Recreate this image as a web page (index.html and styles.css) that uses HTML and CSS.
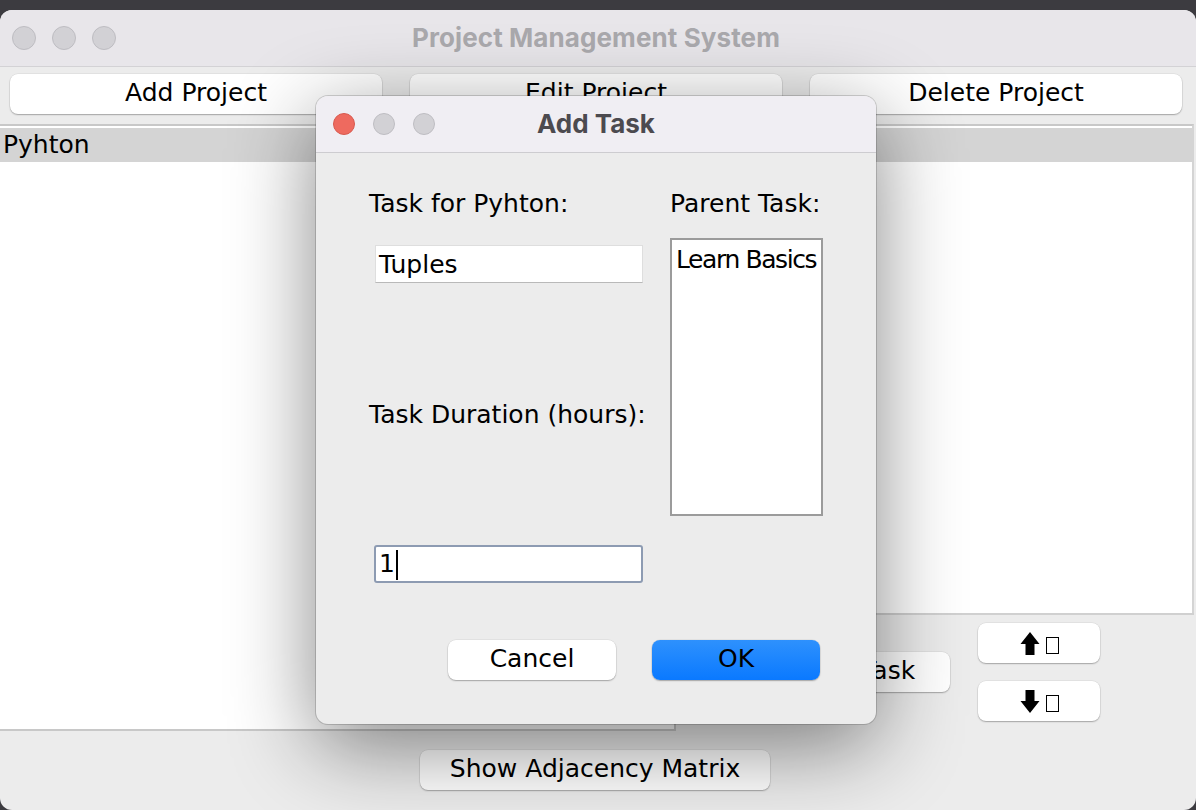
FILE: index.html
```html
<!DOCTYPE html>
<html>
<head>
<meta charset="utf-8">
<title>Project Management System</title>
<link rel="stylesheet" href="styles.css">
</head>
<body>
<div class="window">
  <div class="titlebar">
    <div class="lights">
      <span class="light"></span><span class="light"></span><span class="light"></span>
    </div>
    <div class="title">Project Management System</div>
    <div></div>
  </div>
  <div class="toolbar">
    <button class="btn wide">Add Project</button>
    <button class="btn wide">Edit Project</button>
    <button class="btn wide">Delete Project</button>
  </div>
  <div class="main">
    <div class="projects">
      <div class="row selected">Pyhton</div>
    </div>
    <div class="tasks"></div>
    <div class="side">
      <button class="btn task-btn">Add Task</button>
      <div class="arrows">
        <button class="btn arrow-btn">
          <svg class="arrow" width="20" height="23" viewBox="0 0 20 23"><polygon points="10,0 19.5,12 14.5,12 14.5,23 5.5,23 5.5,12 0.5,12" fill="#000"/></svg><span class="tofu"></span>
        </button>
        <button class="btn arrow-btn">
          <svg class="arrow" width="20" height="23" viewBox="0 0 20 23"><polygon points="10,23 19.5,11 14.5,11 14.5,0 5.5,0 5.5,11 0.5,11" fill="#000"/></svg><span class="tofu"></span>
        </button>
      </div>
    </div>
  </div>
  <div class="bottom">
    <button class="btn matrix">Show Adjacency Matrix</button>
  </div>
</div>

<div class="dialog">
  <div class="dlg-titlebar">
    <div class="dlg-lights">
      <span class="light small red"></span><span class="light small"></span><span class="light small"></span>
    </div>
    <div class="dlg-title">Add Task</div>
    <div></div>
  </div>
  <div class="dlg-body">
    <div class="form">
      <div class="col-left">
        <div class="label first">Task for Pyhton:</div>
        <div class="field name-field">Tuples</div>
        <div class="label duration">Task Duration (hours):</div>
        <div class="field focused">1<span class="caret"></span></div>
      </div>
      <div class="col-right">
        <div class="label first">Parent Task:</div>
        <div class="parent-list">
          <div class="item">Learn Basics</div>
        </div>
      </div>
    </div>
    <div class="actions">
      <button class="btn dlg-btn">Cancel</button>
      <button class="btn dlg-btn primary">OK</button>
    </div>
  </div>
</div>
</body>
</html>
```

FILE: styles.css
```css
* { box-sizing: border-box; }

html, body { margin: 0; padding: 0; }

body {
  width: 1196px;
  height: 810px;
  overflow: hidden;
  position: relative;
  background: #3c3b40;
  font-family: "DejaVu Sans", "Liberation Sans", sans-serif;
  font-size: 25px;
  color: #000;
}

.window {
  margin-top: 10px;
  height: 800px;
  background: #ececec;
  border-radius: 12px;
  overflow: hidden;
  display: flex;
  flex-direction: column;
}

.titlebar {
  flex: none;
  height: 57px;
  background: #e8e6ea;
  border-bottom: 1px solid #d3d2d5;
  display: grid;
  grid-template-columns: 1fr auto 1fr;
  align-items: center;
}

.lights {
  display: flex;
  gap: 16px;
  padding-left: 12px;
}

.light {
  width: 24px;
  height: 24px;
  border-radius: 50%;
  background: #d2d1d5;
  border: 1px solid #bebdc2;
}

.title {
  font-family: Inter, "Liberation Sans", sans-serif;
  font-weight: 700;
  font-size: 26px;
  letter-spacing: 0.1px;
  color: #aaa9ad;
  margin: 0 4px 2px 0;
}

.toolbar {
  flex: none;
  height: 57px;
  display: flex;
  gap: 28px;
  padding: 7px 14px 10px 10px;
}

.btn {
  font-family: "DejaVu Sans", "Liberation Sans", sans-serif;
  font-size: 25px;
  color: #000;
  background: #fff;
  border: none;
  border-radius: 8px;
  box-shadow: 0 1px 1.5px rgba(0, 0, 0, 0.28), 0 0 0 0.5px rgba(0, 0, 0, 0.08);
  padding: 0 0 3px 0;
  height: 40px;
  display: flex;
  align-items: center;
  justify-content: center;
}

.wide { width: 372px; }

.main {
  flex: none;
  height: 616px;
  display: grid;
  grid-template-columns: 676px 1fr;
  grid-template-rows: 489px 127px;
}

.projects {
  grid-column: 1 / -1;
  background: #fff;
  border-top: 2px solid #c8c8c8;
  border-right: 2px solid #d4d4d4;
  margin-right: 2px;
  padding-top: 2px;
}

.row {
  height: 34px;
  line-height: 34px;
  padding-left: 3px;
}

.row.selected { background: #d4d4d4; }

.tasks {
  background: #fff;
  border-right: 2px solid #c8c8c8;
  border-bottom: 2px solid #c8c8c8;
  height: 118px;
}

.side {
  display: flex;
  align-items: center;
  gap: 28px;
  padding-left: 94px;
  padding-bottom: 11px;
  border-top: 2px solid #d0d0d0;
  margin-right: 2px;
}

.task-btn { width: 180px; }

.arrows {
  display: flex;
  flex-direction: column;
  gap: 18px;
}

.arrow-btn {
  width: 122px;
  gap: 6px;
  padding: 0;
}

.tofu {
  width: 13px;
  height: 17px;
  border: 1.5px solid #000;
  margin-top: 4px;
}

.bottom {
  flex: 1;
  display: flex;
  justify-content: center;
  padding: 10px 6px 0 0;
}

.matrix { width: 350px; }

/* Dialog window */
.dialog {
  position: absolute;
  left: 316px;
  top: 96px;
  width: 560px;
  height: 628px;
  background: #ececec;
  border-radius: 12px;
  overflow: hidden;
  box-shadow: 0 0 0 1px rgba(0, 0, 0, 0.16), 0 22px 85px rgba(0, 0, 0, 0.48);
  display: flex;
  flex-direction: column;
}

.dlg-titlebar {
  flex: none;
  height: 57px;
  background: #f0eef3;
  border-bottom: 1px solid #cdccd0;
  display: grid;
  grid-template-columns: 1fr auto 1fr;
  align-items: center;
}

.dlg-lights {
  display: flex;
  gap: 18px;
  padding-left: 17px;
}

.light.small { width: 22px; height: 22px; }

.light.red {
  background: #ee6a5f;
  border-color: #d8594e;
}

.dlg-title {
  font-family: Inter, "Liberation Sans", sans-serif;
  font-weight: 700;
  font-size: 26px;
  color: #4c4a4f;
  margin-bottom: 2px;
}

.dlg-body {
  flex: 1;
  display: flex;
  flex-direction: column;
  padding: 0 56px 0 53px;
}

.form {
  display: flex;
  gap: 20px;
}

.col-left {
  flex: none;
  width: 281px;
  display: flex;
  flex-direction: column;
}

.col-right {
  flex: none;
  width: 153px;
  display: flex;
  flex-direction: column;
}

.label {
  height: 30px;
  line-height: 30px;
  white-space: nowrap;
}

.label.first { margin-top: 36px; }

.field {
  height: 38px;
  line-height: 38px;
  background: #fff;
  white-space: nowrap;
}

.name-field {
  margin-top: 26px;
  margin-left: 6px;
  width: 268px;
  padding-left: 3px;
  border: 1px solid #dedede;
  border-bottom-color: #b9b9b9;
  line-height: 38px;
}

.label.duration { margin-top: 117px; }

.field.focused {
  margin-top: 115px;
  margin-left: 5px;
  width: 269px;
  padding-left: 3px;
  border: 2px solid #8d9bb2;
  border-radius: 3px;
  line-height: 34px;
}

.caret {
  display: inline-block;
  width: 2px;
  height: 30px;
  background: #000;
  vertical-align: middle;
  margin-left: 1px;
}

.parent-list {
  margin-top: 19px;
  height: 278px;
  background: #fff;
  border: 2px solid #9b9b9b;
  padding: 4px 0 0 4px;
}

.item {
  line-height: 32px;
  white-space: nowrap;
  letter-spacing: -1.4px;
}

.actions {
  display: flex;
  justify-content: flex-end;
  gap: 36px;
  margin-top: 57px;
}

.dlg-btn { width: 168px; }

.dlg-btn.primary {
  background: linear-gradient(#2e91fd, #0a79ff);
}
```
